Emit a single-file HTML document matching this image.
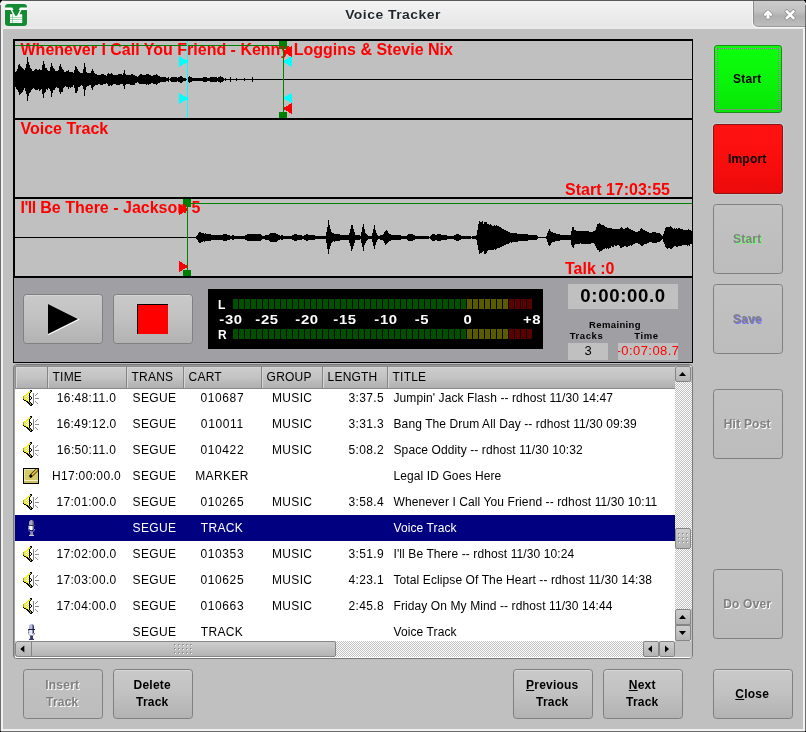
<!DOCTYPE html>
<html><head><meta charset="utf-8"><title>Voice Tracker</title>
<style>
html,body{margin:0;padding:0;background:#000}
body{width:806px;height:732px;overflow:hidden;position:relative;font-family:"Liberation Sans",sans-serif;font-size:12px;color:#000}
#win{will-change:transform;position:absolute;left:0;top:0;width:806px;height:732px;background:#c0c0c0;border-radius:5px 5px 0 0;overflow:hidden}
.a{position:absolute}
#tb{left:0;top:0;width:806px;height:29px;background:linear-gradient(#f4f4f4 0,#f0f0f0 8px,#e6e6e6 26px,#ebebeb 28px,#e8e8e8 29px)}
#tbtop{left:0;top:0;width:806px;height:1px;background:#5a5a5a}
#title{left:0;top:7px;width:786px;transform:scaleX(1.07);text-align:center;font-weight:bold;font-size:13px;letter-spacing:.45px;color:#1f272b;line-height:16px;text-shadow:0 1px 0 #fff}
#tab{left:753px;top:1px;width:52px;height:26px;box-sizing:border-box;border-left:1px solid #8e8e8e;border-bottom:1px solid #9a9a9a;border-radius:0 0 0 5px;background:linear-gradient(#cbcbcb 0,#c2c2c2 40%,#b0b0b0 60%,#bdbdbd 100%);box-shadow:-1px 1px 0 #f6f6f6}
.bl{background:#6c6c6c}.lt{background:#f2f2f2}
/* buttons */
.btn{position:absolute;box-sizing:border-box;padding-right:1.5px;border:1px solid #808080;border-radius:3.5px;background:linear-gradient(#c9c9c9,#c2c2c2 45%,#b2b2b2);font-weight:bold;font-size:12px;letter-spacing:.22px;line-height:17px;text-align:center;display:flex;align-items:center;justify-content:center;box-shadow:inset 0 1px 0 rgba(255,255,255,.25)}
.btn.dis{background:linear-gradient(#c2c2c2,#bcbcbc);color:#808080;box-shadow:none}
.btn span{display:block}
.red{color:#f00;font-weight:bold;font-size:16px;line-height:18px;white-space:nowrap}
/* table */
#tblo{left:13px;top:364px;width:680px;height:295px;box-sizing:border-box;border:1px solid #787878;border-radius:4px;background:#a2a2a2;overflow:hidden}
#tbl{left:1px;top:0;width:677px;height:293px;background:#fff;overflow:hidden}
.row{position:absolute;left:0;width:660px;height:26px;line-height:26px;font-size:12px;white-space:nowrap;letter-spacing:.35px}
.row div{position:absolute;top:0;height:26px}
.sel{background:#000080;color:#fff}
.hd{position:absolute;top:1px;height:22px;line-height:20px;font-size:12px;box-sizing:border-box;padding-left:4.6px;background:linear-gradient(#cdcdcd,#c3c3c3 50%,#afafaf);border-top:1px solid #8c8c8c;border-right:1px solid #858585;box-shadow:inset 1px 1px 0 #d6d6d6;letter-spacing:.2px}
.chk{background-image:conic-gradient(#fff 25%,#c0c0c0 0 50%,#fff 0 75%,#c0c0c0 0);background-size:2px 2px}
.sb{position:absolute;box-sizing:border-box;border:1px solid #858585;border-radius:2px;background:linear-gradient(#cdcdcd,#b4b4b4)}
.sbh{background:linear-gradient(90deg,#cdcdcd,#b4b4b4)}
</style></head><body><div id="win">

<svg width="0" height="0" style="position:absolute"><defs><symbol id="spk" viewBox="0 0 16 16"><rect x="7" y="0" width="2" height="1" fill="#000"/><rect x="6" y="1" width="1" height="1" fill="#f4f400"/><rect x="7" y="1" width="1" height="1" fill="#a8a800"/><rect x="8" y="1" width="1" height="1" fill="#000"/><rect x="5" y="2" width="2" height="1" fill="#f4f400"/><rect x="7" y="2" width="1" height="1" fill="#000"/><rect x="8" y="2" width="2" height="1" fill="#fff"/><rect x="4" y="3" width="2" height="1" fill="#f4f400"/><rect x="6" y="3" width="1" height="1" fill="#000"/><rect x="7" y="3" width="3" height="1" fill="#fff"/><rect x="10" y="3" width="1" height="1" fill="#808080"/><rect x="14" y="3" width="1" height="1" fill="#8c8c8c"/><rect x="3" y="4" width="2" height="1" fill="#f4f400"/><rect x="5" y="4" width="1" height="1" fill="#fff"/><rect x="6" y="4" width="1" height="1" fill="#000"/><rect x="7" y="4" width="3" height="1" fill="#fff"/><rect x="10" y="4" width="1" height="1" fill="#808080"/><rect x="13" y="4" width="1" height="1" fill="#8c8c8c"/><rect x="1" y="5" width="3" height="1" fill="#f4f400"/><rect x="4" y="5" width="1" height="1" fill="#fff"/><rect x="5" y="5" width="1" height="1" fill="#f4f400"/><rect x="6" y="5" width="1" height="1" fill="#000"/><rect x="7" y="5" width="3" height="1" fill="#fff"/><rect x="10" y="5" width="1" height="1" fill="#808080"/><rect x="12" y="5" width="1" height="1" fill="#8c8c8c"/><rect x="0" y="6" width="1" height="1" fill="#a8a800"/><rect x="1" y="6" width="1" height="1" fill="#f4f400"/><rect x="2" y="6" width="1" height="1" fill="#d8d8ee"/><rect x="3" y="6" width="1" height="1" fill="#fff"/><rect x="4" y="6" width="1" height="1" fill="#f4f400"/><rect x="5" y="6" width="1" height="1" fill="#fff"/><rect x="6" y="6" width="2" height="1" fill="#000"/><rect x="8" y="6" width="2" height="1" fill="#fff"/><rect x="10" y="6" width="1" height="1" fill="#808080"/><rect x="0" y="7" width="1" height="1" fill="#a8a800"/><rect x="1" y="7" width="1" height="1" fill="#f4f400"/><rect x="2" y="7" width="1" height="1" fill="#d8d8ee"/><rect x="3" y="7" width="1" height="1" fill="#f4f400"/><rect x="4" y="7" width="1" height="1" fill="#fff"/><rect x="5" y="7" width="1" height="1" fill="#f4f400"/><rect x="6" y="7" width="1" height="1" fill="#000"/><rect x="7" y="7" width="1" height="1" fill="#fff"/><rect x="8" y="7" width="1" height="1" fill="#000"/><rect x="9" y="7" width="1" height="1" fill="#fff"/><rect x="10" y="7" width="1" height="1" fill="#808080"/><rect x="0" y="8" width="1" height="1" fill="#a8a800"/><rect x="1" y="8" width="1" height="1" fill="#f4f400"/><rect x="2" y="8" width="1" height="1" fill="#d8d8ee"/><rect x="3" y="8" width="1" height="1" fill="#fff"/><rect x="4" y="8" width="1" height="1" fill="#f4f400"/><rect x="5" y="8" width="1" height="1" fill="#fff"/><rect x="6" y="8" width="1" height="1" fill="#000"/><rect x="7" y="8" width="1" height="1" fill="#fff"/><rect x="8" y="8" width="1" height="1" fill="#000"/><rect x="9" y="8" width="1" height="1" fill="#fff"/><rect x="10" y="8" width="1" height="1" fill="#808080"/><rect x="12" y="8" width="4" height="1" fill="#8c8c8c"/><rect x="0" y="9" width="1" height="1" fill="#000"/><rect x="1" y="9" width="3" height="1" fill="#f4f400"/><rect x="4" y="9" width="1" height="1" fill="#fff"/><rect x="5" y="9" width="1" height="1" fill="#f4f400"/><rect x="6" y="9" width="2" height="1" fill="#000"/><rect x="8" y="9" width="2" height="1" fill="#fff"/><rect x="10" y="9" width="1" height="1" fill="#808080"/><rect x="1" y="10" width="2" height="1" fill="#000"/><rect x="3" y="10" width="2" height="1" fill="#f4f400"/><rect x="5" y="10" width="1" height="1" fill="#fff"/><rect x="6" y="10" width="1" height="1" fill="#000"/><rect x="7" y="10" width="3" height="1" fill="#fff"/><rect x="10" y="10" width="1" height="1" fill="#808080"/><rect x="3" y="11" width="2" height="1" fill="#000"/><rect x="5" y="11" width="1" height="1" fill="#f4f400"/><rect x="6" y="11" width="1" height="1" fill="#000"/><rect x="7" y="11" width="3" height="1" fill="#fff"/><rect x="10" y="11" width="1" height="1" fill="#808080"/><rect x="12" y="11" width="1" height="1" fill="#8c8c8c"/><rect x="4" y="12" width="2" height="1" fill="#000"/><rect x="6" y="12" width="1" height="1" fill="#a8a800"/><rect x="7" y="12" width="1" height="1" fill="#000"/><rect x="8" y="12" width="2" height="1" fill="#fff"/><rect x="10" y="12" width="1" height="1" fill="#808080"/><rect x="13" y="12" width="1" height="1" fill="#8c8c8c"/><rect x="5" y="13" width="2" height="1" fill="#000"/><rect x="7" y="13" width="1" height="1" fill="#a8a800"/><rect x="8" y="13" width="1" height="1" fill="#000"/><rect x="9" y="13" width="1" height="1" fill="#fff"/><rect x="10" y="13" width="1" height="1" fill="#808080"/><rect x="14" y="13" width="1" height="1" fill="#8c8c8c"/><rect x="6" y="14" width="1" height="1" fill="#000"/><rect x="7" y="14" width="1" height="1" fill="#a8a800"/><rect x="8" y="14" width="2" height="1" fill="#000"/><rect x="7" y="15" width="2" height="1" fill="#000"/></symbol><symbol id="mrk" viewBox="0 0 16 16"><rect x="0" y="0" width="16" height="16" fill="#000"/><rect x="1" y="1" width="14" height="14" fill="#d6ca68"/><rect x="1" y="1" width="14" height="1" fill="#ece5a0"/><rect x="1" y="1" width="1" height="11" fill="#ece5a0"/><rect x="1" y="12" width="14" height="1" fill="#f3efc2"/><rect x="1" y="13" width="14" height="2" fill="#c9bd5c"/><g shape-rendering="auto"><path d="M14.4 1.4L7.7 8.1" stroke="#000" stroke-width="2.9" stroke-linecap="round"/><path d="M14.6 1.4L8.8 7.2" stroke="#f2c11c" stroke-width="1.5" stroke-linecap="butt"/><path d="M13.6 1.2L8.4 6.4" stroke="#fbe58a" stroke-width=".7"/></g></symbol><symbol id="mic" viewBox="0 0 16 16"><g shape-rendering="auto"><defs><linearGradient id="mict" x1="0" x2="1" y1="0" y2="0"><stop offset="0" stop-color="#a8acd4"/><stop offset=".3" stop-color="#b8bce0"/><stop offset=".5" stop-color="#b8bce0"/><stop offset="1" stop-color="#181848"/></linearGradient><linearGradient id="micb" x1="0" x2="1" y1="0" y2="0"><stop offset="0" stop-color="#c4c8ec"/><stop offset=".3" stop-color="#e8eaff"/><stop offset=".5" stop-color="#e8eaff"/><stop offset="1" stop-color="#14143c"/></linearGradient></defs><path d="M6 2.6Q6 0 8.5 0Q11 0 11 2.6V5.2H6z" fill="url(#mict)"/><path d="M6 5.8H11V8.6Q11 10.3 8.5 10.3Q6 10.3 6 8.6z" fill="url(#micb)"/><rect x="5.1" y="5" width="6.9" height="1" fill="#1c1c48"/><path d="M5.5 6.4V9.3Q5.5 11.5 8.5 11.5Q11.5 11.5 11.5 9.3V9" fill="none" stroke="#2c2c5c" stroke-width="1" stroke-dasharray="1 1"/><rect x="7.2" y="11.8" width="2.8" height="3.2" fill="#34346a"/><rect x="6" y="14.8" width="5" height="1.2" fill="#3c3c70"/></g></symbol><symbol id="micw" viewBox="0 0 16 16"><g shape-rendering="auto"><defs><linearGradient id="micwt" x1="0" x2="1" y1="0" y2="0"><stop offset="0" stop-color="#8e8ea6"/><stop offset=".3" stop-color="#a8a8ba"/><stop offset=".5" stop-color="#a8a8ba"/><stop offset="1" stop-color="#4c4c6c"/></linearGradient><linearGradient id="micwb" x1="0" x2="1" y1="0" y2="0"><stop offset="0" stop-color="#d8d8e4"/><stop offset=".3" stop-color="#ffffff"/><stop offset=".5" stop-color="#ffffff"/><stop offset="1" stop-color="#484868"/></linearGradient></defs><path d="M6 2.6Q6 0 8.5 0Q11 0 11 2.6V5.2H6z" fill="url(#micwt)"/><path d="M6 5.8H11V8.6Q11 10.3 8.5 10.3Q6 10.3 6 8.6z" fill="url(#micwb)"/><rect x="5.1" y="5" width="6.9" height="1" fill="#34345c"/><path d="M5.5 6.4V9.3Q5.5 11.5 8.5 11.5Q11.5 11.5 11.5 9.3V9" fill="none" stroke="#f0f0f8" stroke-width="1" stroke-dasharray="1 1"/><rect x="7.2" y="11.8" width="2.8" height="3.2" fill="#8c8ca6"/><rect x="6" y="14.8" width="5" height="1.2" fill="#c4c4d4"/></g></symbol></defs></svg>
<!-- title bar -->
<div class="a" id="tb"></div>
<div class="a" id="tbtop"></div>
<div class="a" id="title">Voice Tracker</div>
<div class="a" id="tab"></div>
<svg class="a" style="left:0;top:0" width="806" height="30" viewBox="0 0 806 30">
 <!-- app icon -->
 <g>
  <rect x="5" y="4" width="22" height="22" rx="3.2" fill="#158a35"/>
  <path d="M5 7.4h7.2l2.9 5.6h2l2.9-5.6H27v2.7h-5.4l-3 5.7h-5l-3-5.7H5z" fill="#fff"/>
  <rect x="10" y="14.2" width="12.2" height="8.8" fill="#fff"/>
  <path d="M12.2 10.1h7.8l-3 5.6h-1.8z" fill="#158a35"/>
  <rect x="10" y="16.9" width="12.2" height=".7" fill="#7cc290"/><rect x="10" y="19.3" width="12.2" height=".7" fill="#7cc290"/><rect x="10" y="21.6" width="12.2" height=".5" fill="#a8d8b4"/>
  <rect x="12.3" y="15" width=".7" height="8" fill="#7cc290"/>
 </g>
 <!-- shade arrow -->
 <g fill="none" stroke-linejoin="round">
  <path d="M765.1 14.6L768 11.7L770.9 14.6" stroke="#8c8c8c" stroke-width="3.8" stroke-linecap="round"/>
  <path d="M768 12.5V19.4" stroke="#8c8c8c" stroke-width="4.2" stroke-linecap="butt"/>
  <path d="M765.1 14.6L768 11.7L770.9 14.6" stroke="#fff" stroke-width="2.5" stroke-linecap="round"/>
  <path d="M768 12.5V18.8" stroke="#fff" stroke-width="3" stroke-linecap="butt"/>
 </g>
 <g stroke-linecap="butt" fill="none">
  <path d="M785.5 10.2l9.2 9.2M794.7 10.2l-9.2 9.2" stroke="#8c8c8c" stroke-width="3.9"/>
  <path d="M786 10.7l8.2 8.2M794.2 10.7l-8.2 8.2" stroke="#fff" stroke-width="2.6"/>
 </g>
</svg>

<!-- window borders -->
<div class="a bl" style="left:0;top:5px;width:1px;height:727px"></div>
<div class="a lt" style="left:1px;top:29px;width:2px;height:702px"></div>
<div class="a bl" style="left:805px;top:5px;width:1px;height:727px"></div>
<div class="a lt" style="left:803px;top:29px;width:2px;height:702px"></div>
<div class="a lt" style="left:1px;top:729px;width:804px;height:2px"></div>
<div class="a bl" style="left:0;top:731px;width:806px;height:1px"></div>
<div class="a" style="left:0;top:731px;width:1px;height:1px;background:#000"></div>
<div class="a" style="left:805px;top:731px;width:1px;height:1px;background:#000"></div>

<!-- waveform panes -->
<svg class="a" style="left:0;top:0" width="806" height="370" viewBox="0 0 806 370" shape-rendering="crispEdges">
 <g fill="#000">
  <rect x="13" y="39" width="680" height="2"/><rect x="13" y="118" width="680" height="2"/>
  <rect x="13" y="197" width="680" height="2"/><rect x="13" y="276" width="680" height="2"/>
  <rect x="13" y="39" width="2" height="239"/><rect x="692" y="39" width="1" height="239"/>
  <rect x="15" y="79" width="677" height="1"/><rect x="15" y="237" width="677" height="1"/>
  <path d="M15 72h1v15h-1zM16 71h1v18h-1zM17 69h1v21h-1zM18 65h1v27h-1zM19 64h1v31h-1zM20 66h1v28h-1zM21 67h1v26h-1zM22 68h1v24h-1zM23 69h1v21h-1zM24 70h1v18h-1zM25 68h1v23h-1zM26 64h1v30h-1zM27 57h1v44h-1zM28 62h1v34h-1zM29 65h1v28h-1zM30 68h1v24h-1zM31 69h1v21h-1zM32 71h1v18h-1zM33 71h1v17h-1zM34 70h1v19h-1zM35 69h1v21h-1zM36 69h1v21h-1zM37 70h1v20h-1zM38 70h1v19h-1zM39 69h1v22h-1zM40 70h1v20h-1zM41 70h1v19h-1zM42 65h1v29h-1zM43 61h1v37h-1zM44 64h1v29h-1zM45 68h1v24h-1zM46 68h1v21h-1zM47 70h1v20h-1zM48 71h1v17h-1zM49 71h1v18h-1zM50 67h1v24h-1zM51 63h1v34h-1zM52 66h1v27h-1zM53 68h1v22h-1zM54 69h1v21h-1zM55 71h1v17h-1zM56 71h1v16h-1zM57 71h1v17h-1zM58 70h1v18h-1zM59 66h1v26h-1zM60 64h1v30h-1zM61 67h1v25h-1zM62 69h1v23h-1zM63 70h1v18h-1zM64 72h1v15h-1zM65 72h1v14h-1zM66 71h1v16h-1zM67 71h1v16h-1zM68 70h1v19h-1zM69 72h1v15h-1zM70 72h1v16h-1zM71 72h1v15h-1zM72 72h1v15h-1zM73 73h1v12h-1zM74 70h1v18h-1zM75 66h1v27h-1zM76 67h1v26h-1zM77 69h1v22h-1zM78 71h1v16h-1zM79 72h1v15h-1zM80 73h1v13h-1zM81 73h1v12h-1zM82 73h1v13h-1zM83 69h1v20h-1zM84 63h1v33h-1zM85 67h1v23h-1zM86 72h1v15h-1zM87 73h1v13h-1zM88 73h1v13h-1zM89 73h1v12h-1zM90 73h1v12h-1zM91 71h1v17h-1zM92 69h1v21h-1zM93 71h1v16h-1zM94 73h1v13h-1zM95 74h1v11h-1zM96 74h1v11h-1zM97 75h1v10h-1zM98 75h1v9h-1zM99 75h1v9h-1zM100 75h1v10h-1zM101 74h1v11h-1zM102 74h1v11h-1zM103 74h1v10h-1zM104 75h1v9h-1zM105 75h1v9h-1zM106 76h1v7h-1zM107 74h1v10h-1zM108 73h1v13h-1zM109 74h1v12h-1zM110 74h1v11h-1zM111 73h1v13h-1zM112 74h1v11h-1zM113 75h1v9h-1zM114 75h1v9h-1zM115 75h1v9h-1zM116 75h1v10h-1zM117 75h1v10h-1zM118 74h1v11h-1zM119 74h1v11h-1zM120 74h1v10h-1zM121 74h1v10h-1zM122 75h1v9h-1zM123 73h1v13h-1zM124 70h1v19h-1zM125 74h1v11h-1zM126 75h1v9h-1zM127 75h1v9h-1zM128 75h1v9h-1zM129 75h1v9h-1zM130 75h1v10h-1zM131 74h1v11h-1zM132 74h1v11h-1zM133 75h1v10h-1zM134 75h1v10h-1zM135 76h1v7h-1zM136 76h1v7h-1zM137 77h1v5h-1zM138 76h1v7h-1zM139 75h1v9h-1zM140 74h1v10h-1zM141 74h1v10h-1zM142 75h1v9h-1zM143 75h1v9h-1zM144 75h1v9h-1zM145 75h1v9h-1zM146 74h1v11h-1zM147 74h1v10h-1zM148 74h1v11h-1zM149 75h1v9h-1zM150 75h1v9h-1zM151 76h1v7h-1zM152 76h1v7h-1zM153 75h1v9h-1zM154 75h1v9h-1zM155 75h1v9h-1zM156 74h1v11h-1zM157 75h1v9h-1zM158 76h1v7h-1zM159 76h1v7h-1zM160 77h1v5h-1zM161 77h1v5h-1zM162 77h1v5h-1zM163 77h1v5h-1zM164 77h1v5h-1zM165 77h1v5h-1zM166 78h1v3h-1zM167 78h1v3h-1zM168 77h1v5h-1zM170 78h1v3h-1zM171 77h1v5h-1zM172 77h1v5h-1zM173 77h1v5h-1zM174 77h1v5h-1zM175 77h1v5h-1zM176 77h1v5h-1zM177 78h1v3h-1zM178 77h1v5h-1zM179 77h1v5h-1zM180 76h1v7h-1zM181 76h1v7h-1zM182 77h1v5h-1zM183 78h1v3h-1zM184 78h1v3h-1zM185 78h1v3h-1zM187 78h1v3h-1zM188 77h1v5h-1zM189 76h1v7h-1zM190 77h1v5h-1zM191 77h1v5h-1zM192 78h1v3h-1zM193 78h1v3h-1zM194 78h1v3h-1zM195 78h1v3h-1zM196 78h1v3h-1zM197 78h1v3h-1zM198 78h1v3h-1zM199 78h1v3h-1zM200 78h1v3h-1zM201 78h1v3h-1zM202 78h1v3h-1zM203 77h1v5h-1zM204 77h1v5h-1zM205 77h1v5h-1zM206 77h1v5h-1zM207 78h1v3h-1zM208 78h1v3h-1zM209 78h1v3h-1zM210 77h1v5h-1zM211 77h1v5h-1zM212 77h1v5h-1zM213 77h1v5h-1zM214 77h1v5h-1zM215 77h1v5h-1zM216 77h1v5h-1zM217 78h1v3h-1zM218 77h1v5h-1zM219 77h1v5h-1zM220 76h1v7h-1zM221 77h1v5h-1zM222 77h1v5h-1zM223 78h1v3h-1zM225 78h1v3h-1zM230 77h1v5h-1zM236 78h1v3h-1zM244 78h1v3h-1zM252 77h1v5h-1z"/>
  <path d="M196 236h1v3h-1zM197 235h1v5h-1zM198 233h1v9h-1zM199 232h1v11h-1zM200 232h1v11h-1zM201 233h1v9h-1zM202 233h1v9h-1zM203 233h1v8h-1zM204 234h1v8h-1zM205 233h1v8h-1zM206 234h1v7h-1zM207 234h1v7h-1zM208 234h1v7h-1zM209 234h1v7h-1zM210 234h1v7h-1zM211 235h1v5h-1zM212 235h1v5h-1zM213 235h1v5h-1zM214 235h1v5h-1zM215 235h1v5h-1zM216 235h1v5h-1zM217 235h1v5h-1zM218 235h1v5h-1zM219 235h1v5h-1zM220 235h1v5h-1zM221 235h1v5h-1zM222 235h1v5h-1zM223 234h1v7h-1zM224 234h1v7h-1zM225 234h1v7h-1zM226 234h1v7h-1zM227 235h1v5h-1zM228 235h1v5h-1zM229 235h1v5h-1zM230 236h1v3h-1zM231 236h1v3h-1zM232 235h1v5h-1zM233 235h1v5h-1zM234 236h1v3h-1zM235 236h1v3h-1zM236 236h1v3h-1zM237 236h1v3h-1zM238 236h1v3h-1zM239 236h1v3h-1zM240 236h1v3h-1zM241 236h1v3h-1zM242 236h1v3h-1zM243 236h1v3h-1zM244 236h1v3h-1zM245 235h1v5h-1zM246 235h1v5h-1zM247 234h1v7h-1zM248 234h1v7h-1zM249 234h1v7h-1zM250 234h1v7h-1zM251 234h1v7h-1zM252 234h1v7h-1zM253 234h1v7h-1zM254 234h1v7h-1zM255 234h1v7h-1zM256 234h1v7h-1zM257 234h1v7h-1zM258 234h1v7h-1zM259 234h1v7h-1zM260 234h1v7h-1zM261 235h1v5h-1zM262 236h1v3h-1zM263 236h1v3h-1zM264 236h1v3h-1zM265 235h1v5h-1zM266 235h1v5h-1zM267 235h1v5h-1zM268 235h1v5h-1zM269 234h1v7h-1zM270 233h1v9h-1zM271 233h1v9h-1zM272 233h1v9h-1zM273 233h1v9h-1zM274 233h1v9h-1zM275 233h1v9h-1zM276 234h1v8h-1zM277 234h1v7h-1zM278 235h1v5h-1zM279 235h1v5h-1zM280 236h1v3h-1zM281 235h1v5h-1zM282 235h1v5h-1zM283 236h1v3h-1zM284 236h1v3h-1zM285 236h1v3h-1zM286 236h1v3h-1zM287 236h1v3h-1zM288 236h1v3h-1zM289 236h1v3h-1zM290 236h1v3h-1zM291 236h1v3h-1zM292 235h1v5h-1zM293 235h1v5h-1zM294 234h1v7h-1zM295 234h1v7h-1zM296 234h1v7h-1zM297 235h1v5h-1zM298 235h1v5h-1zM299 235h1v5h-1zM300 235h1v5h-1zM301 235h1v5h-1zM302 236h1v3h-1zM303 236h1v3h-1zM304 235h1v5h-1zM305 235h1v5h-1zM306 234h1v7h-1zM307 234h1v7h-1zM308 235h1v5h-1zM309 235h1v5h-1zM310 235h1v5h-1zM311 235h1v5h-1zM312 235h1v5h-1zM313 235h1v5h-1zM314 235h1v5h-1zM315 236h1v3h-1zM316 236h1v3h-1zM317 236h1v3h-1zM318 236h1v3h-1zM319 236h1v3h-1zM320 236h1v3h-1zM321 236h1v3h-1zM322 236h1v3h-1zM323 236h1v3h-1zM324 236h1v3h-1zM325 236h1v3h-1zM326 232h1v11h-1zM327 227h1v22h-1zM328 220h1v34h-1zM329 225h1v24h-1zM330 229h1v17h-1zM331 232h1v11h-1zM332 233h1v9h-1zM333 233h1v8h-1zM334 234h1v8h-1zM335 234h1v7h-1zM336 234h1v7h-1zM337 234h1v7h-1zM338 234h1v7h-1zM339 234h1v7h-1zM340 235h1v5h-1zM341 235h1v5h-1zM342 235h1v5h-1zM343 235h1v5h-1zM344 235h1v5h-1zM345 235h1v5h-1zM346 235h1v5h-1zM347 235h1v5h-1zM348 235h1v5h-1zM349 233h1v10h-1zM350 229h1v17h-1zM351 225h1v26h-1zM352 225h1v24h-1zM353 229h1v17h-1zM354 232h1v11h-1zM355 235h1v5h-1zM356 235h1v5h-1zM357 235h1v5h-1zM358 235h1v5h-1zM359 235h1v5h-1zM360 236h1v3h-1zM361 232h1v11h-1zM362 227h1v20h-1zM363 224h1v27h-1zM364 229h1v16h-1zM365 233h1v10h-1zM366 234h1v7h-1zM367 235h1v5h-1zM368 236h1v3h-1zM369 236h1v3h-1zM370 236h1v3h-1zM371 236h1v3h-1zM372 233h1v9h-1zM373 229h1v17h-1zM374 225h1v24h-1zM375 230h1v15h-1zM376 233h1v9h-1zM377 235h1v5h-1zM378 236h1v3h-1zM379 236h1v3h-1zM380 235h1v5h-1zM381 235h1v5h-1zM382 235h1v5h-1zM383 234h1v7h-1zM384 232h1v11h-1zM385 231h1v14h-1zM386 230h1v14h-1zM387 231h1v12h-1zM388 233h1v9h-1zM389 234h1v7h-1zM390 234h1v7h-1zM391 235h1v5h-1zM392 235h1v5h-1zM393 235h1v5h-1zM394 235h1v5h-1zM395 235h1v5h-1zM396 235h1v5h-1zM397 235h1v5h-1zM398 235h1v5h-1zM399 235h1v5h-1zM400 235h1v5h-1zM401 236h1v3h-1zM402 236h1v3h-1zM403 236h1v3h-1zM404 236h1v3h-1zM405 236h1v3h-1zM406 236h1v3h-1zM407 235h1v5h-1zM408 234h1v7h-1zM409 234h1v7h-1zM410 234h1v7h-1zM411 234h1v7h-1zM412 234h1v7h-1zM413 235h1v5h-1zM414 235h1v5h-1zM415 236h1v3h-1zM416 236h1v3h-1zM417 236h1v3h-1zM418 236h1v3h-1zM419 236h1v3h-1zM420 236h1v3h-1zM421 236h1v3h-1zM422 236h1v3h-1zM423 236h1v3h-1zM424 236h1v3h-1zM425 236h1v3h-1zM426 236h1v3h-1zM427 236h1v3h-1zM428 236h1v3h-1zM430 236h1v3h-1zM431 235h1v5h-1zM432 234h1v7h-1zM433 234h1v7h-1zM434 234h1v7h-1zM435 235h1v5h-1zM436 235h1v5h-1zM437 234h1v7h-1zM438 234h1v7h-1zM439 234h1v7h-1zM440 234h1v7h-1zM441 235h1v5h-1zM442 235h1v5h-1zM443 235h1v5h-1zM444 235h1v5h-1zM445 235h1v5h-1zM446 235h1v5h-1zM447 236h1v3h-1zM448 236h1v3h-1zM449 236h1v3h-1zM450 236h1v3h-1zM451 236h1v3h-1zM452 236h1v3h-1zM453 236h1v3h-1zM454 235h1v5h-1zM455 235h1v5h-1zM456 234h1v7h-1zM457 234h1v7h-1zM458 234h1v7h-1zM459 235h1v5h-1zM460 235h1v5h-1zM461 236h1v3h-1zM462 236h1v3h-1zM463 236h1v3h-1zM464 236h1v3h-1zM465 236h1v3h-1zM466 236h1v3h-1zM467 236h1v3h-1zM468 236h1v3h-1zM469 236h1v3h-1zM470 236h1v3h-1zM472 236h1v3h-1zM473 236h1v3h-1zM474 236h1v3h-1zM475 236h1v3h-1zM476 235h1v5h-1zM477 230h1v15h-1zM478 224h1v26h-1zM479 221h1v33h-1zM480 222h1v31h-1zM481 222h1v31h-1zM482 221h1v31h-1zM483 224h1v27h-1zM484 222h1v32h-1zM485 222h1v32h-1zM486 222h1v31h-1zM487 224h1v27h-1zM488 224h1v26h-1zM489 225h1v25h-1zM490 224h1v26h-1zM491 225h1v25h-1zM492 226h1v24h-1zM493 226h1v24h-1zM494 225h1v24h-1zM495 226h1v24h-1zM496 225h1v24h-1zM497 226h1v22h-1zM498 226h1v22h-1zM499 227h1v21h-1zM500 227h1v20h-1zM501 228h1v19h-1zM502 229h1v17h-1zM503 229h1v17h-1zM504 230h1v15h-1zM505 230h1v15h-1zM506 231h1v13h-1zM507 231h1v13h-1zM508 232h1v12h-1zM509 232h1v11h-1zM510 233h1v9h-1zM511 233h1v10h-1zM512 233h1v9h-1zM513 233h1v9h-1zM514 233h1v9h-1zM515 233h1v9h-1zM516 233h1v9h-1zM517 234h1v8h-1zM518 234h1v7h-1zM519 234h1v7h-1zM520 234h1v7h-1zM521 234h1v7h-1zM522 234h1v7h-1zM523 234h1v7h-1zM524 234h1v7h-1zM525 234h1v7h-1zM526 234h1v7h-1zM527 234h1v7h-1zM528 235h1v5h-1zM529 235h1v5h-1zM530 235h1v5h-1zM531 235h1v5h-1zM532 235h1v5h-1zM533 235h1v5h-1zM534 235h1v5h-1zM535 235h1v5h-1zM536 235h1v5h-1zM537 236h1v3h-1zM546 236h1v3h-1zM547 233h1v9h-1zM548 231h1v14h-1zM549 229h1v17h-1zM550 231h1v14h-1zM551 232h1v11h-1zM552 232h1v10h-1zM553 233h1v9h-1zM554 233h1v9h-1zM555 233h1v8h-1zM556 234h1v7h-1zM557 234h1v7h-1zM558 234h1v7h-1zM559 234h1v7h-1zM560 235h1v5h-1zM561 235h1v5h-1zM562 235h1v5h-1zM563 235h1v5h-1zM564 235h1v5h-1zM565 235h1v5h-1zM566 235h1v5h-1zM567 235h1v5h-1zM568 235h1v5h-1zM569 235h1v5h-1zM570 235h1v5h-1zM571 231h1v14h-1zM572 227h1v20h-1zM573 227h1v21h-1zM574 230h1v15h-1zM575 230h1v14h-1zM576 231h1v13h-1zM577 231h1v13h-1zM578 231h1v13h-1zM579 231h1v13h-1zM580 231h1v12h-1zM581 231h1v13h-1zM582 231h1v13h-1zM583 231h1v13h-1zM584 231h1v13h-1zM585 231h1v13h-1zM586 231h1v13h-1zM587 231h1v13h-1zM588 231h1v13h-1zM589 232h1v12h-1zM590 232h1v12h-1zM591 232h1v11h-1zM592 232h1v11h-1zM593 231h1v12h-1zM594 231h1v13h-1zM595 230h1v16h-1zM596 227h1v21h-1zM597 224h1v26h-1zM598 224h1v26h-1zM599 223h1v29h-1zM600 224h1v27h-1zM601 225h1v26h-1zM602 225h1v25h-1zM603 225h1v24h-1zM604 226h1v23h-1zM605 227h1v21h-1zM606 227h1v22h-1zM607 228h1v20h-1zM608 228h1v21h-1zM609 228h1v20h-1zM610 228h1v20h-1zM611 228h1v18h-1zM612 229h1v18h-1zM613 229h1v18h-1zM614 229h1v16h-1zM615 229h1v17h-1zM616 229h1v17h-1zM617 229h1v16h-1zM618 229h1v16h-1zM619 229h1v17h-1zM620 228h1v20h-1zM621 227h1v21h-1zM622 228h1v19h-1zM623 229h1v18h-1zM624 229h1v17h-1zM625 228h1v18h-1zM626 228h1v19h-1zM627 227h1v20h-1zM628 228h1v18h-1zM629 229h1v17h-1zM630 229h1v16h-1zM631 230h1v16h-1zM632 230h1v15h-1zM633 231h1v13h-1zM634 231h1v13h-1zM635 232h1v11h-1zM636 232h1v11h-1zM637 232h1v11h-1zM638 231h1v13h-1zM639 231h1v13h-1zM640 229h1v16h-1zM641 228h1v18h-1zM642 229h1v17h-1zM643 230h1v15h-1zM644 230h1v14h-1zM645 231h1v13h-1zM646 231h1v13h-1zM647 232h1v11h-1zM648 232h1v11h-1zM649 233h1v9h-1zM650 233h1v9h-1zM651 233h1v9h-1zM652 232h1v11h-1zM653 232h1v11h-1zM654 232h1v11h-1zM655 232h1v11h-1zM656 233h1v10h-1zM657 233h1v9h-1zM658 233h1v9h-1zM659 233h1v9h-1zM660 234h1v7h-1zM661 235h1v5h-1zM662 236h1v3h-1zM663 234h1v8h-1zM664 231h1v13h-1zM665 228h1v19h-1zM666 227h1v21h-1zM667 227h1v22h-1zM668 227h1v21h-1zM669 227h1v21h-1zM670 226h1v23h-1zM671 227h1v22h-1zM672 228h1v20h-1zM673 229h1v18h-1zM674 228h1v18h-1zM675 229h1v17h-1zM676 228h1v19h-1zM677 229h1v18h-1zM678 228h1v18h-1zM679 228h1v18h-1zM680 229h1v17h-1zM681 229h1v17h-1zM682 229h1v16h-1zM683 230h1v15h-1zM684 230h1v15h-1zM685 230h1v15h-1zM686 230h1v15h-1zM687 230h1v16h-1zM688 229h1v16h-1zM689 230h1v16h-1zM690 230h1v14h-1zM691 231h1v13h-1z"/>
 </g>
 <!-- handle squares (below text) -->
 <g fill="#008000">
  <rect x="279" y="41" width="8" height="8"/><rect x="279" y="112" width="8" height="6"/>
  <rect x="183" y="199" width="8" height="8"/><rect x="183" y="270" width="8" height="6"/>
 </g>
</svg>
<div class="a red" style="left:20.5px;top:41px">Whenever I Call You Friend - Kenny Loggins &amp; Stevie Nix</div>
<div class="a red" style="left:20.5px;top:120px">Voice Track</div>
<div class="a red" style="left:20.5px;top:199px"><span style="letter-spacing:-.45px">I'll</span> Be There - Jackson 5</div>
<div class="a red" style="left:565px;top:181px">Start 17:03:55</div>
<div class="a red" style="left:565px;top:260px">Talk :0</div>
<svg class="a" style="left:0;top:0" width="806" height="290" viewBox="0 0 806 290" shape-rendering="crispEdges">
 <g fill="#008000">
  <rect x="15" y="45" width="268" height="1"/>
  <rect x="283" y="41" width="1" height="77"/>
  <rect x="187" y="203" width="505" height="1"/>
  <rect x="187" y="199" width="1" height="77"/>
 </g>
 <g fill="#00ffff">
  <rect x="187" y="41" width="1" height="77"/>
  <path d="M179 56v11l8-4.5v-2z"/><path d="M179 93v11l8-4.5v-2z"/>
  <path d="M292 56v11l-8-4.5v-2z"/><path d="M292 93v10l-8-4v-2z"/>
 </g>
 <g fill="#ff0000">
  <path d="M292 46v11l-8-4.5v-2z"/><path d="M292 103v11l-8-4.5v-2z"/>
  <path d="M179 204v11l8-4.5v-2z"/><path d="M179 261v11l8-4.5v-2z"/>
 </g>
</svg>

<!-- control panel -->
<div class="a" style="left:13px;top:278px;width:680px;height:85px;background:#a0a0a4"></div>
<div class="a" style="left:13px;top:278px;width:1px;height:85px;background:#000"></div>
<div class="a" style="left:13px;top:362px;width:680px;height:1px;background:#000"></div>
<div class="a" style="left:692px;top:278px;width:1px;height:85px;background:#000"></div>

<div class="btn" style="left:23px;top:294px;width:80px;height:50px"></div>
<div class="btn" style="left:113px;top:294px;width:80px;height:50px"></div>
<svg class="a" style="left:0;top:290px" width="210" height="60" viewBox="0 290 210 60">
 <path d="M48 304.5L78.5 319.5L48 334.6" fill="none" stroke="#fff" stroke-width="1.2"/>
 <path d="M48 304L78 319L48 334z" fill="#000"/>
 <rect x="137" y="304" width="31" height="30" fill="#000" shape-rendering="crispEdges"/>
 <rect x="138" y="305" width="30" height="29" fill="#f00" shape-rendering="crispEdges"/>
</svg>

<!-- meter -->
<div class="a" style="left:208px;top:289px;width:335px;height:60px;background:#000"></div>
<div class="a" style="left:233px;top:299px;width:234px;height:10px;background:repeating-linear-gradient(90deg,#005000 0 5px,#000 5px 6px)"></div>
<div class="a" style="left:467px;top:299px;width:42px;height:10px;background:repeating-linear-gradient(90deg,#5a5a00 0 5px,#000 5px 6px)"></div>
<div class="a" style="left:509px;top:299px;width:24px;height:10px;background:repeating-linear-gradient(90deg,#5a0000 0 5px,#000 5px 6px)"></div>
<div class="a" style="left:233px;top:329px;width:234px;height:10px;background:repeating-linear-gradient(90deg,#005000 0 5px,#000 5px 6px)"></div>
<div class="a" style="left:467px;top:329px;width:42px;height:10px;background:repeating-linear-gradient(90deg,#5a5a00 0 5px,#000 5px 6px)"></div>
<div class="a" style="left:509px;top:329px;width:24px;height:10px;background:repeating-linear-gradient(90deg,#5a0000 0 5px,#000 5px 6px)"></div>
<div class="a" id="mlab" style="left:0;top:0;color:#fff;font-weight:bold;font-size:12px;line-height:14px;letter-spacing:.5px">
 <div class="a" style="left:218px;top:298px">L</div>
 <div class="a" style="left:218px;top:328px">R</div>
 <div class="a ml" style="transform:scaleX(1.24);left:211px;top:313px;width:40px;text-align:center">-30</div>
 <div class="a ml" style="transform:scaleX(1.24);left:247px;top:313px;width:40px;text-align:center">-25</div>
 <div class="a ml" style="transform:scaleX(1.24);left:287px;top:313px;width:40px;text-align:center">-20</div>
 <div class="a ml" style="transform:scaleX(1.24);left:325px;top:313px;width:40px;text-align:center">-15</div>
 <div class="a ml" style="transform:scaleX(1.24);left:366px;top:313px;width:40px;text-align:center">-10</div>
 <div class="a ml" style="transform:scaleX(1.24);left:402px;top:313px;width:40px;text-align:center">-5</div>
 <div class="a ml" style="transform:scaleX(1.24);left:447.6px;top:313px;width:40px;text-align:center">0</div>
 <div class="a ml" style="transform:scaleX(1.24);left:512px;top:313px;width:40px;text-align:center">+8</div>
</div>

<!-- counters -->
<div class="a" style="left:568px;top:284px;width:110px;height:25px;background:#c0c0c0;text-align:center;font-weight:bold;font-size:18.6px;line-height:24px;letter-spacing:.65px;text-indent:.2px">0:00:00.0</div>
<div class="a" style="left:565px;top:318.5px;width:100px;text-align:center;font-weight:bold;font-size:9.5px;line-height:12px;letter-spacing:.38px">Remaining</div>
<div class="a" style="left:566.5px;top:330.3px;width:40px;text-align:center;font-weight:bold;font-size:9.5px;line-height:12px;letter-spacing:.6px">Tracks</div>
<div class="a" style="left:616.5px;top:330.3px;width:60px;text-align:center;font-weight:bold;font-size:9.5px;line-height:12px;letter-spacing:.6px">Time</div>
<div class="a" style="left:568px;top:343px;width:40px;height:17px;background:#c0c0c0;text-align:center;font-size:13px;line-height:15px">3</div>
<div class="a" style="left:618px;top:343px;width:60px;height:17px;background:#c0c0c0;text-align:center;font-size:13px;line-height:15px;color:#f00;overflow:hidden;white-space:nowrap;letter-spacing:.45px"><span style="margin:0 -4px">-0:07:08.7</span></div>

<!-- right buttons -->
<div class="btn" style="left:714px;top:45px;width:68px;height:68px;border-color:#1c8a1c;border-radius:3px;box-shadow:0 0 0 1px rgba(200,190,200,.5);background:linear-gradient(#0cff0c,#0af20a 60%,#06e606)"><i class="a" style="left:2px;top:2px;right:2px;bottom:2px;border:1px dotted #e040e0"></i>Start</div>
<div class="btn" style="left:713px;top:124px;width:70px;height:70px;border-color:#8c1414;border-radius:3px;background:linear-gradient(#ff1212,#f80d0d 60%,#ec0a0a);box-shadow:0 0 0 1px rgba(200,212,212,.55)">Import</div>
<div class="btn dis" style="left:713px;top:204px;width:70px;height:70px;text-shadow:1px 1px 0 #70ff70">Start</div>
<div class="btn dis" style="left:713px;top:284px;width:70px;height:70px;text-shadow:1px 1px 0 #7070ff">Save</div>
<div class="btn dis" style="left:713px;top:389px;width:70px;height:70px;text-shadow:1px 1px 0 #fff">Hit Post</div>
<div class="btn dis" style="left:713px;top:569px;width:70px;height:70px;text-shadow:1px 1px 0 #fff">Do Over</div>
<div class="btn" style="left:713px;top:669px;width:80px;height:50px"><span><u>C</u>lose</span></div>

<!-- bottom buttons -->
<div class="btn dis" style="left:23px;top:669px;width:80px;height:50px;text-shadow:1px 1px 0 #fff"><span>Insert<br>Track</span></div>
<div class="btn" style="left:113px;top:669px;width:80px;height:50px"><span>Delete<br>Track</span></div>
<div class="btn" style="left:513px;top:669px;width:80px;height:50px"><span><u>P</u>revious<br>Track</span></div>
<div class="btn" style="left:603px;top:669px;width:80px;height:50px"><span><u>N</u>ext<br>Track</span></div>

<!-- table -->
<div class="a" id="tblo"><div class="a" id="tbl">
 <div class="a" style="left:0;top:0;width:677px;height:1px;background:#999"></div>
 <!-- rows: table-local coords = page - (15,365) -->
 <div class="row" style="top:20px"><svg class="a" style="left:8px;top:5px" width="16" height="16" viewBox="0 0 16 16" shape-rendering="crispEdges"><use href="#spk"/></svg><div style="left:32px;width:79px;text-align:center">16:48:11.0</div><div style="left:111px;width:57px;text-align:center">SEGUE</div><div style="left:168px;width:78px;text-align:center;letter-spacing:.62px;text-indent:.6px;">010687</div><div style="left:246.7px;width:61px;text-align:center">MUSIC</div><div style="left:307px;width:62px;text-align:right">3:37.5</div><div style="left:378.5px;letter-spacing:.1px">Jumpin' Jack Flash -- rdhost 11/30 14:47</div></div>
 <div class="row" style="top:46px"><svg class="a" style="left:8px;top:5px" width="16" height="16" viewBox="0 0 16 16" shape-rendering="crispEdges"><use href="#spk"/></svg><div style="left:32px;width:79px;text-align:center">16:49:12.0</div><div style="left:111px;width:57px;text-align:center">SEGUE</div><div style="left:168px;width:78px;text-align:center;letter-spacing:.62px;text-indent:.6px;">010011</div><div style="left:246.7px;width:61px;text-align:center">MUSIC</div><div style="left:307px;width:62px;text-align:right">3:31.3</div><div style="left:378.5px;letter-spacing:.1px">Bang The Drum All Day -- rdhost 11/30 09:39</div></div>
 <div class="row" style="top:72px"><svg class="a" style="left:8px;top:5px" width="16" height="16" viewBox="0 0 16 16" shape-rendering="crispEdges"><use href="#spk"/></svg><div style="left:32px;width:79px;text-align:center">16:50:11.0</div><div style="left:111px;width:57px;text-align:center">SEGUE</div><div style="left:168px;width:78px;text-align:center;letter-spacing:.62px;text-indent:.6px;">010422</div><div style="left:246.7px;width:61px;text-align:center">MUSIC</div><div style="left:307px;width:62px;text-align:right">5:08.2</div><div style="left:378.5px;letter-spacing:.1px">Space Oddity -- rdhost 11/30 10:32</div></div>
 <div class="row" style="top:98px"><svg class="a" style="left:8px;top:5px" width="16" height="16" viewBox="0 0 16 16" shape-rendering="crispEdges"><use href="#mrk"/></svg><div style="left:32px;width:79px;text-align:center">H17:00:00.0</div><div style="left:111px;width:57px;text-align:center">SEGUE</div><div style="left:168px;width:78px;text-align:center;">MARKER</div><div style="left:246.7px;width:61px;text-align:center"></div><div style="left:307px;width:62px;text-align:right"></div><div style="left:378.5px;letter-spacing:.1px">Legal ID Goes Here</div></div>
 <div class="row" style="top:124px"><svg class="a" style="left:8px;top:5px" width="16" height="16" viewBox="0 0 16 16" shape-rendering="crispEdges"><use href="#spk"/></svg><div style="left:32px;width:79px;text-align:center">17:01:00.0</div><div style="left:111px;width:57px;text-align:center">SEGUE</div><div style="left:168px;width:78px;text-align:center;letter-spacing:.62px;text-indent:.6px;">010265</div><div style="left:246.7px;width:61px;text-align:center">MUSIC</div><div style="left:307px;width:62px;text-align:right">3:58.4</div><div style="left:378.5px;letter-spacing:.1px">Whenever I Call You Friend -- rdhost 11/30 10:11</div></div>
 <div class="row sel" style="top:150px"><svg class="a" style="left:8px;top:5px" width="16" height="16" viewBox="0 0 16 16" shape-rendering="crispEdges"><use href="#micw"/></svg><div style="left:32px;width:79px;text-align:center"></div><div style="left:111px;width:57px;text-align:center">SEGUE</div><div style="left:168px;width:78px;text-align:center;">TRACK</div><div style="left:246.7px;width:61px;text-align:center"></div><div style="left:307px;width:62px;text-align:right"></div><div style="left:378.5px;letter-spacing:.1px">Voice Track</div></div>
 <div class="row" style="top:176px"><svg class="a" style="left:8px;top:5px" width="16" height="16" viewBox="0 0 16 16" shape-rendering="crispEdges"><use href="#spk"/></svg><div style="left:32px;width:79px;text-align:center">17:02:00.0</div><div style="left:111px;width:57px;text-align:center">SEGUE</div><div style="left:168px;width:78px;text-align:center;letter-spacing:.62px;text-indent:.6px;">010353</div><div style="left:246.7px;width:61px;text-align:center">MUSIC</div><div style="left:307px;width:62px;text-align:right">3:51.9</div><div style="left:378.5px;letter-spacing:.1px">I'll Be There -- rdhost 11/30 10:24</div></div>
 <div class="row" style="top:202px"><svg class="a" style="left:8px;top:5px" width="16" height="16" viewBox="0 0 16 16" shape-rendering="crispEdges"><use href="#spk"/></svg><div style="left:32px;width:79px;text-align:center">17:03:00.0</div><div style="left:111px;width:57px;text-align:center">SEGUE</div><div style="left:168px;width:78px;text-align:center;letter-spacing:.62px;text-indent:.6px;">010625</div><div style="left:246.7px;width:61px;text-align:center">MUSIC</div><div style="left:307px;width:62px;text-align:right">4:23.1</div><div style="left:378.5px;letter-spacing:.1px">Total Eclipse Of The Heart -- rdhost 11/30 14:38</div></div>
 <div class="row" style="top:228px"><svg class="a" style="left:8px;top:5px" width="16" height="16" viewBox="0 0 16 16" shape-rendering="crispEdges"><use href="#spk"/></svg><div style="left:32px;width:79px;text-align:center">17:04:00.0</div><div style="left:111px;width:57px;text-align:center">SEGUE</div><div style="left:168px;width:78px;text-align:center;letter-spacing:.62px;text-indent:.6px;">010663</div><div style="left:246.7px;width:61px;text-align:center">MUSIC</div><div style="left:307px;width:62px;text-align:right">2:45.8</div><div style="left:378.5px;letter-spacing:.1px">Friday On My Mind -- rdhost 11/30 14:44</div></div>
 <div class="row" style="top:254px"><svg class="a" style="left:8px;top:5px" width="16" height="16" viewBox="0 0 16 16" shape-rendering="crispEdges"><use href="#mic"/></svg><div style="left:32px;width:79px;text-align:center"></div><div style="left:111px;width:57px;text-align:center">SEGUE</div><div style="left:168px;width:78px;text-align:center;">TRACK</div><div style="left:246.7px;width:61px;text-align:center"></div><div style="left:307px;width:62px;text-align:right"></div><div style="left:378.5px;letter-spacing:.1px">Voice Track</div></div>
 <!-- header -->
 <div class="hd" style="left:0;width:33px;border-left:1px solid #8c8c8c"></div>
 <div class="hd" style="left:33px;width:79px">TIME</div>
 <div class="hd" style="left:112px;width:57px">TRANS</div>
 <div class="hd" style="left:169px;width:78px">CART</div>
 <div class="hd" style="left:247px;width:61px">GROUP</div>
 <div class="hd" style="left:308px;width:65px">LENGTH</div>
 <div class="hd" style="left:373px;width:287px;border-right:0">TITLE</div>
 <div class="a" style="left:0;top:23px;width:660px;height:1px;background:#8a8a8a"></div>
 <!-- vertical scrollbar -->
 <div class="a chk" style="left:660px;top:1px;width:17px;height:275px"></div>
 <div class="a" style="left:676px;top:1px;width:1px;height:16px;background:#c0c0c0"></div>
 <div class="a" style="left:676px;top:244px;width:1px;height:32px;background:#c0c0c0"></div>
 <div class="a" style="left:660px;top:246px;width:16px;height:28px;background:#9a9a9a"></div>
 <div class="sb" style="left:660px;top:1px;width:16px;height:16px"></div>
 <div class="sb" style="left:660px;top:163px;width:16px;height:21px"></div>
 <div class="sb" style="left:660px;top:244px;width:16px;height:16px"></div>
 <div class="sb" style="left:660px;top:260px;width:16px;height:16px"></div>
 <!-- horizontal scrollbar -->
 <div class="a chk" style="left:0;top:276px;width:660px;height:16px"></div>
 <div class="a" style="left:660px;top:276px;width:17px;height:16px;background:#c0c0c0"></div>
 <div class="sb" style="left:0;top:276px;width:17px;height:16px;border-radius:3px 0 0 3px"></div>
 <div class="sb" style="left:16px;top:276px;width:305px;height:16px;border-radius:0 2px 2px 0"></div>
 <div class="a" style="left:630px;top:278px;width:28px;height:12px;background:#9a9a9a"></div>
 <div class="sb" style="left:628px;top:276px;width:16px;height:16px"></div>
 <div class="sb" style="left:644px;top:276px;width:16px;height:16px"></div>
 <svg class="a" style="left:0;top:0" width="677" height="292" viewBox="0 0 677 292">
  <g fill="#000">
   <path d="M664 11h7l-3.5-4z"/>
   <path d="M664 254h7l-3.5-4z"/>
   <path d="M664 266h7l-3.5 4z"/>
   <path d="M9.3 280.5v7l-4-3.5z"/>
   <path d="M637 280.5v7l-4-3.5z"/>
   <path d="M650 280.5v7l4-3.5z"/>
  </g>
  <g shape-rendering="crispEdges"><rect x="663" y="168" width="1" height="1" fill="#8a8a8a"/><rect x="664" y="169" width="1" height="1" fill="#fff"/><rect x="664" y="168" width="1" height="1" fill="#a8a8a8"/><rect x="663" y="169" width="1" height="1" fill="#a8a8a8"/><rect x="663" y="172" width="1" height="1" fill="#8a8a8a"/><rect x="664" y="173" width="1" height="1" fill="#fff"/><rect x="664" y="172" width="1" height="1" fill="#a8a8a8"/><rect x="663" y="173" width="1" height="1" fill="#a8a8a8"/><rect x="663" y="176" width="1" height="1" fill="#8a8a8a"/><rect x="664" y="177" width="1" height="1" fill="#fff"/><rect x="664" y="176" width="1" height="1" fill="#a8a8a8"/><rect x="663" y="177" width="1" height="1" fill="#a8a8a8"/><rect x="667" y="168" width="1" height="1" fill="#8a8a8a"/><rect x="668" y="169" width="1" height="1" fill="#fff"/><rect x="668" y="168" width="1" height="1" fill="#a8a8a8"/><rect x="667" y="169" width="1" height="1" fill="#a8a8a8"/><rect x="667" y="172" width="1" height="1" fill="#8a8a8a"/><rect x="668" y="173" width="1" height="1" fill="#fff"/><rect x="668" y="172" width="1" height="1" fill="#a8a8a8"/><rect x="667" y="173" width="1" height="1" fill="#a8a8a8"/><rect x="667" y="176" width="1" height="1" fill="#8a8a8a"/><rect x="668" y="177" width="1" height="1" fill="#fff"/><rect x="668" y="176" width="1" height="1" fill="#a8a8a8"/><rect x="667" y="177" width="1" height="1" fill="#a8a8a8"/><rect x="671" y="168" width="1" height="1" fill="#8a8a8a"/><rect x="672" y="169" width="1" height="1" fill="#fff"/><rect x="672" y="168" width="1" height="1" fill="#a8a8a8"/><rect x="671" y="169" width="1" height="1" fill="#a8a8a8"/><rect x="671" y="172" width="1" height="1" fill="#8a8a8a"/><rect x="672" y="173" width="1" height="1" fill="#fff"/><rect x="672" y="172" width="1" height="1" fill="#a8a8a8"/><rect x="671" y="173" width="1" height="1" fill="#a8a8a8"/><rect x="671" y="176" width="1" height="1" fill="#8a8a8a"/><rect x="672" y="177" width="1" height="1" fill="#fff"/><rect x="672" y="176" width="1" height="1" fill="#a8a8a8"/><rect x="671" y="177" width="1" height="1" fill="#a8a8a8"/><rect x="159" y="279" width="1" height="1" fill="#8a8a8a"/><rect x="160" y="280" width="1" height="1" fill="#fff"/><rect x="160" y="279" width="1" height="1" fill="#a8a8a8"/><rect x="159" y="280" width="1" height="1" fill="#a8a8a8"/><rect x="159" y="283" width="1" height="1" fill="#8a8a8a"/><rect x="160" y="284" width="1" height="1" fill="#fff"/><rect x="160" y="283" width="1" height="1" fill="#a8a8a8"/><rect x="159" y="284" width="1" height="1" fill="#a8a8a8"/><rect x="159" y="287" width="1" height="1" fill="#8a8a8a"/><rect x="160" y="288" width="1" height="1" fill="#fff"/><rect x="160" y="287" width="1" height="1" fill="#a8a8a8"/><rect x="159" y="288" width="1" height="1" fill="#a8a8a8"/><rect x="163" y="279" width="1" height="1" fill="#8a8a8a"/><rect x="164" y="280" width="1" height="1" fill="#fff"/><rect x="164" y="279" width="1" height="1" fill="#a8a8a8"/><rect x="163" y="280" width="1" height="1" fill="#a8a8a8"/><rect x="163" y="283" width="1" height="1" fill="#8a8a8a"/><rect x="164" y="284" width="1" height="1" fill="#fff"/><rect x="164" y="283" width="1" height="1" fill="#a8a8a8"/><rect x="163" y="284" width="1" height="1" fill="#a8a8a8"/><rect x="163" y="287" width="1" height="1" fill="#8a8a8a"/><rect x="164" y="288" width="1" height="1" fill="#fff"/><rect x="164" y="287" width="1" height="1" fill="#a8a8a8"/><rect x="163" y="288" width="1" height="1" fill="#a8a8a8"/><rect x="167" y="279" width="1" height="1" fill="#8a8a8a"/><rect x="168" y="280" width="1" height="1" fill="#fff"/><rect x="168" y="279" width="1" height="1" fill="#a8a8a8"/><rect x="167" y="280" width="1" height="1" fill="#a8a8a8"/><rect x="167" y="283" width="1" height="1" fill="#8a8a8a"/><rect x="168" y="284" width="1" height="1" fill="#fff"/><rect x="168" y="283" width="1" height="1" fill="#a8a8a8"/><rect x="167" y="284" width="1" height="1" fill="#a8a8a8"/><rect x="167" y="287" width="1" height="1" fill="#8a8a8a"/><rect x="168" y="288" width="1" height="1" fill="#fff"/><rect x="168" y="287" width="1" height="1" fill="#a8a8a8"/><rect x="167" y="288" width="1" height="1" fill="#a8a8a8"/><rect x="171" y="279" width="1" height="1" fill="#8a8a8a"/><rect x="172" y="280" width="1" height="1" fill="#fff"/><rect x="172" y="279" width="1" height="1" fill="#a8a8a8"/><rect x="171" y="280" width="1" height="1" fill="#a8a8a8"/><rect x="171" y="283" width="1" height="1" fill="#8a8a8a"/><rect x="172" y="284" width="1" height="1" fill="#fff"/><rect x="172" y="283" width="1" height="1" fill="#a8a8a8"/><rect x="171" y="284" width="1" height="1" fill="#a8a8a8"/><rect x="171" y="287" width="1" height="1" fill="#8a8a8a"/><rect x="172" y="288" width="1" height="1" fill="#fff"/><rect x="172" y="287" width="1" height="1" fill="#a8a8a8"/><rect x="171" y="288" width="1" height="1" fill="#a8a8a8"/><rect x="175" y="279" width="1" height="1" fill="#8a8a8a"/><rect x="176" y="280" width="1" height="1" fill="#fff"/><rect x="176" y="279" width="1" height="1" fill="#a8a8a8"/><rect x="175" y="280" width="1" height="1" fill="#a8a8a8"/><rect x="175" y="283" width="1" height="1" fill="#8a8a8a"/><rect x="176" y="284" width="1" height="1" fill="#fff"/><rect x="176" y="283" width="1" height="1" fill="#a8a8a8"/><rect x="175" y="284" width="1" height="1" fill="#a8a8a8"/><rect x="175" y="287" width="1" height="1" fill="#8a8a8a"/><rect x="176" y="288" width="1" height="1" fill="#fff"/><rect x="176" y="287" width="1" height="1" fill="#a8a8a8"/><rect x="175" y="288" width="1" height="1" fill="#a8a8a8"/></g>
 </svg>
</div></div>

</div></body></html>
